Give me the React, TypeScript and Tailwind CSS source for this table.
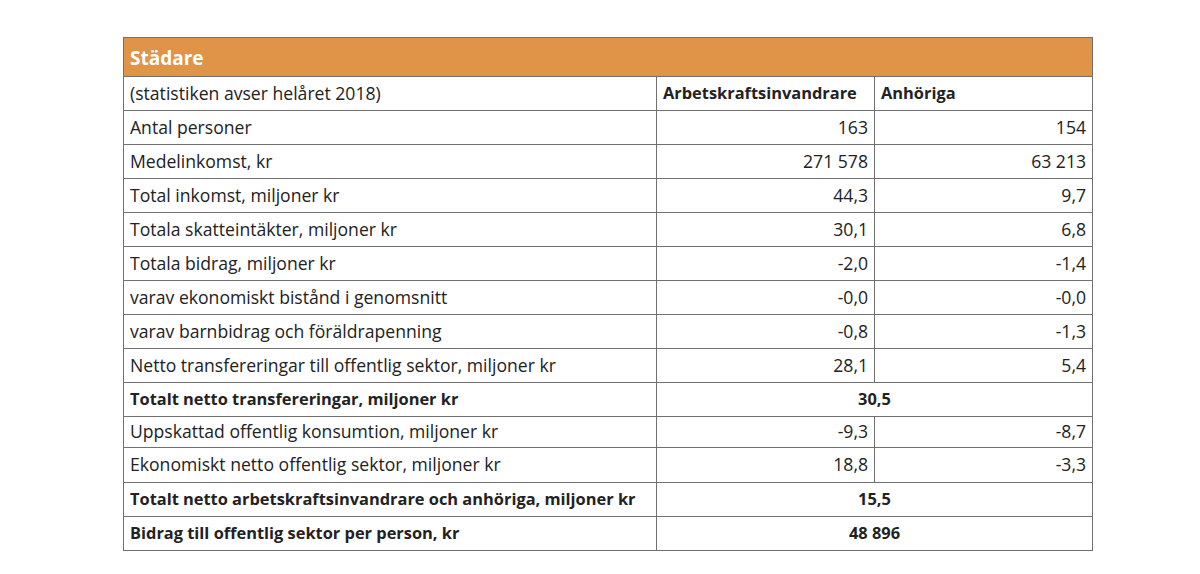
const rows: { label: string; a?: string; b?: string; merged?: string; bold?: boolean; h?: string }[] = [
  { label: "Antal personer", a: "163", b: "154" },
  { label: "Medelinkomst, kr", a: "271 578", b: "63 213" },
  { label: "Total inkomst, miljoner kr", a: "44,3", b: "9,7" },
  { label: "Totala skatteintäkter, miljoner kr", a: "30,1", b: "6,8" },
  { label: "Totala bidrag, miljoner kr", a: "-2,0", b: "-1,4" },
  { label: "varav ekonomiskt bistånd i genomsnitt", a: "-0,0", b: "-0,0" },
  { label: "varav barnbidrag och föräldrapenning", a: "-0,8", b: "-1,3" },
  { label: "Netto transfereringar till offentlig sektor, miljoner kr", a: "28,1", b: "5,4" },
  { label: "Totalt netto transfereringar, miljoner kr", merged: "30,5", bold: true },
  { label: "Uppskattad offentlig konsumtion, miljoner kr", a: "-9,3", b: "-8,7", h: "h-[31px]" },
  { label: "Ekonomiskt netto offentlig sektor, miljoner kr", a: "18,8", b: "-3,3", h: "h-[35px]" },
  { label: "Totalt netto arbetskraftsinvandrare och anhöriga, miljoner kr", merged: "15,5", bold: true },
  { label: "Bidrag till offentlig sektor per person, kr", merged: "48 896", bold: true },
];

const cell = "border border-[#707070] px-[6px] leading-none";
const strong = "font-bold text-[16.4px]";

export default function App() {
  return (
    <div className="w-[1200px] h-[574px] bg-white pt-[37px] pl-[123px] font-['Open_Sans',sans-serif] text-[#222] text-[17.6px]">
      <table className="border-collapse w-[969px] table-fixed">
        <colgroup>
          <col className="w-[533px]" />
          <col className="w-[218px]" />
          <col className="w-[218px]" />
        </colgroup>
        <tbody>
          <tr className="h-[39px]">
            <td colSpan={3} className={`${cell} bg-[#e09447] text-white font-bold text-[19px] pt-[3px]`}>
              Städare
            </td>
          </tr>
          <tr className="h-[34px]">
            <td className={cell}>(statistiken avser helåret 2018)</td>
            <td className={`${cell} ${strong}`}>Arbetskraftsinvandrare</td>
            <td className={`${cell} ${strong}`}>Anhöriga</td>
          </tr>
          {rows.map((r, i) => (
            <tr key={i} className={r.h ?? "h-[34px]"}>
              <td className={`${cell} ${r.bold ? strong : ""}`}>{r.label}</td>
              {r.merged ? (
                <td colSpan={2} className={`${cell} ${strong} text-center`}>
                  {r.merged}
                </td>
              ) : (
                <>
                  <td className={`${cell} text-right`}>{r.a}</td>
                  <td className={`${cell} text-right`}>{r.b}</td>
                </>
              )}
            </tr>
          ))}
        </tbody>
      </table>
    </div>
  );
}
